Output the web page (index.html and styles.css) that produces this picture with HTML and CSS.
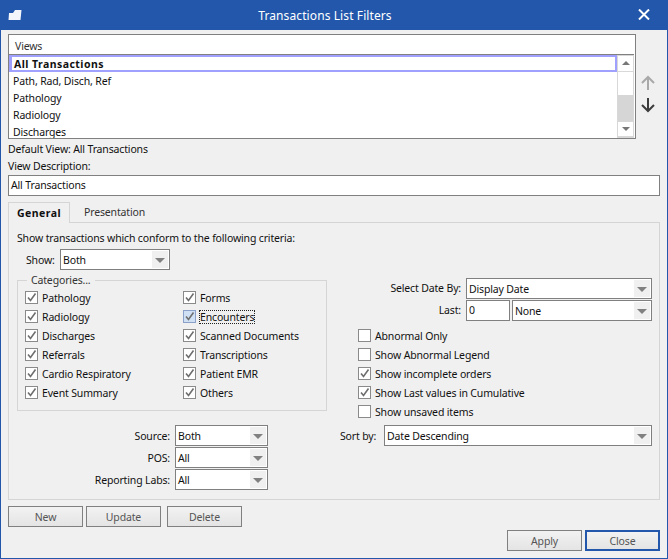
FILE: index.html
```html
<!DOCTYPE html>
<html lang="en">
<head>
    <meta charset="UTF-8">
    <meta name="viewport" content="width=device-width, initial-scale=1.0">
    <title>Transactions List Filters</title>
    <link rel="stylesheet" href="styles.css">
</head>
<body>

<svg class="defs" width="0" height="0">
    <symbol id="tick" viewBox="0 0 11 11"><path d="M2 5.5 L4.5 8.5 L9.5 1.5" fill="none" stroke="#6e6e6e" stroke-width="1.6"/></symbol>
</svg>

<div class="window">

    <!-- Title bar -->
    <div class="titlebar">
        <svg class="app-icon" width="14" height="12" viewBox="0 0 14 12"><path d="M1 4 L5 4 L7 1 L13.5 1 L12.5 11 L0.5 11 Z" fill="#f4f6fb"/></svg>
        <span class="title">Transactions List Filters</span>
        <svg class="close-icon" width="12" height="11" viewBox="0 0 12 11"><path d="M1 0.5 L11 10.5 M11 0.5 L1 10.5" stroke="#fff" stroke-width="2"/></svg>
    </div>

    <div class="content">

        <!-- Views list -->
        <div class="views-row">
            <div class="views">
                <div class="views-head">Views</div>
                <div class="views-body">
                    <div class="views-list">
                        <div class="view-item selected">All Transactions</div>
                        <div class="view-item">Path, Rad, Disch, Ref</div>
                        <div class="view-item">Pathology</div>
                        <div class="view-item">Radiology</div>
                        <div class="view-item">Discharges</div>
                    </div>
                    <div class="scrollbar">
                        <div class="scroll-btn"><span class="tri-up"></span></div>
                        <div class="scroll-track"><div class="scroll-thumb"></div></div>
                        <div class="scroll-btn"><span class="tri-down"></span></div>
                    </div>
                </div>
            </div>
            <div class="move-btns">
                <svg width="16" height="16" viewBox="0 0 16 16"><path d="M8 15 L8 2 M2 8 L8 2 L14 8" fill="none" stroke="#a9a9a9" stroke-width="2"/></svg>
                <svg width="16" height="16" viewBox="0 0 16 16"><path d="M8 1 L8 14 M2 8 L8 14 L14 8" fill="none" stroke="#3c3c3c" stroke-width="2"/></svg>
            </div>
        </div>

        <div class="default-view">Default View: All Transactions</div>
        <div class="desc-label">View Description:</div>
        <div class="desc-input">All Transactions</div>

        <!-- Tabs -->
        <div class="tabs">
            <div class="tab active">General</div>
            <div class="tab">Presentation</div>
        </div>

        <div class="panel">
            <div class="criteria">Show transactions which conform to the following criteria:</div>
            <div class="show-row">
                <span class="show-label">Show:</span>
                <div class="combo show-combo"><span class="combo-text">Both</span><span class="combo-btn"></span></div>
            </div>

            <div class="panel-grid">
                <fieldset class="categories">
                    <legend>Categories...</legend>
                    <div class="cat-grid">
                        <label class="check"><span class="box"><svg><use href="#tick"/></svg></span>Pathology</label>
                        <label class="check"><span class="box"><svg><use href="#tick"/></svg></span>Forms</label>
                        <label class="check"><span class="box"><svg><use href="#tick"/></svg></span>Radiology</label>
                        <label class="check"><span class="box hot"><svg><use href="#tick"/></svg></span><span class="focused">Encounters</span></label>
                        <label class="check"><span class="box"><svg><use href="#tick"/></svg></span>Discharges</label>
                        <label class="check"><span class="box"><svg><use href="#tick"/></svg></span>Scanned Documents</label>
                        <label class="check"><span class="box"><svg><use href="#tick"/></svg></span>Referrals</label>
                        <label class="check"><span class="box"><svg><use href="#tick"/></svg></span>Transcriptions</label>
                        <label class="check"><span class="box"><svg><use href="#tick"/></svg></span>Cardio Respiratory</label>
                        <label class="check"><span class="box"><svg><use href="#tick"/></svg></span>Patient EMR</label>
                        <label class="check"><span class="box"><svg><use href="#tick"/></svg></span>Event Summary</label>
                        <label class="check"><span class="box"><svg><use href="#tick"/></svg></span>Others</label>
                    </div>
                </fieldset>

                <div class="date-col">
                    <div class="date-row">
                        <span class="date-label">Select Date By:</span>
                        <div class="combo grow"><span class="combo-text">Display Date</span><span class="combo-btn"></span></div>
                    </div>
                    <div class="date-row">
                        <span class="date-label">Last:</span>
                        <div class="last-input">0</div>
                        <div class="combo grow"><span class="combo-text">None</span><span class="combo-btn"></span></div>
                    </div>
                    <div class="options">
                        <label class="check"><span class="box"></span>Abnormal Only</label>
                        <label class="check"><span class="box"></span>Show Abnormal Legend</label>
                        <label class="check"><span class="box"><svg><use href="#tick"/></svg></span>Show incomplete orders</label>
                        <label class="check"><span class="box"><svg><use href="#tick"/></svg></span>Show Last values in Cumulative</label>
                        <label class="check"><span class="box"></span>Show unsaved items</label>
                    </div>
                </div>

                <div class="source-col">
                    <div class="source-row">
                        <span class="source-label">Source:</span>
                        <div class="combo source-combo"><span class="combo-text">Both</span><span class="combo-btn"></span></div>
                    </div>
                    <div class="source-row">
                        <span class="source-label">POS:</span>
                        <div class="combo source-combo"><span class="combo-text">All</span><span class="combo-btn"></span></div>
                    </div>
                    <div class="source-row">
                        <span class="source-label">Reporting Labs:</span>
                        <div class="combo source-combo"><span class="combo-text">All</span><span class="combo-btn"></span></div>
                    </div>
                </div>

                <div class="sort-row">
                    <span class="sort-label">Sort by:</span>
                    <div class="combo grow"><span class="combo-text">Date Descending</span><span class="combo-btn"></span></div>
                </div>
            </div>
        </div>

        <!-- Buttons -->
        <div class="view-btns">
            <button class="btn">New</button>
            <button class="btn">Update</button>
            <button class="btn btn-gap">Delete</button>
        </div>
        <div class="dialog-btns">
            <button class="btn">Apply</button>
            <button class="btn default">Close</button>
        </div>
    </div>
</div>

</body>
</html>
```

FILE: styles.css
```css
* {
    box-sizing: border-box;
}
html, body {
    margin: 0;
    padding: 0;
}
body {
    width: 668px;
    height: 559px;
    overflow: hidden;
    font-family: "Noto Sans", sans-serif;
    font-size: 10.5px;
    letter-spacing: -0.15px;
    color: #111;
    background-color: #f0f0f0;
}
.defs {
    position: absolute;
}
.window {
    height: 559px;
    border: 1px solid #2257ab;
    border-top: none;
}
.titlebar {
    height: 30px;
    margin: 0 -1px;
    padding: 0 18px 0 8px;
    background-color: #2257ab;
    color: #fff;
    display: flex;
    align-items: center;
}
.title {
    flex: 1;
    padding: 1px 10px 0 0;
    text-align: center;
    font-size: 12px;
    letter-spacing: 0.1px;
}
.close-icon {
    margin-top: -1px;
}
.content {
    padding: 4px 7px 0;
}

/* Views list */
.views-row {
    display: flex;
}
.views {
    width: 628px;
    height: 105px;
    border: 1px solid #808080;
    background-color: #fff;
}
.views-head {
    height: 20px;
    padding: 4px 6px 0;
    line-height: 15px;
    border-bottom: 1px solid #808080;
    margin-right: 1px;
    color: #333;
}
.views-body {
    display: flex;
    height: 83px;
    overflow: hidden;
}
.views-list {
    flex: 1;
}
.view-item {
    height: 17px;
    line-height: 19px;
    padding-left: 4px;
}
.view-item.selected {
    border: 2px solid #a0a0ff;
    border-left-width: 3px;
    line-height: 15px;
    padding-left: 2px;
    font-weight: bold;
    letter-spacing: 0.45px;
}
.scrollbar {
    width: 17px;
    margin-right: 1px;
    display: flex;
    flex-direction: column;
    border: 1px solid #d8d8d8;
    border-top: none;
}
.scroll-btn {
    height: 17px;
    display: flex;
    align-items: center;
    justify-content: center;
    border-top: 1px solid #d8d8d8;
    border-bottom: 1px solid #d8d8d8;
}
.scroll-track {
    flex: 1;
    padding-top: 23px;
}
.scroll-thumb {
    height: 26px;
    background-color: #d6d6d6;
}
.tri-up, .tri-down {
    width: 0;
    height: 0;
    border-left: 4px solid transparent;
    border-right: 4px solid transparent;
}
.tri-up {
    border-bottom: 4px solid #777;
}
.tri-down {
    border-top: 4px solid #777;
}
.move-btns {
    display: flex;
    flex-direction: column;
    gap: 6px;
    padding: 41px 0 0 4px;
}
.default-view {
    margin-top: 4px;
    height: 13px;
    line-height: 13px;
}
.desc-label {
    margin-top: 4px;
    height: 13px;
    line-height: 13px;
}
.desc-input {
    margin-top: 2px;
    width: 652px;
    height: 21px;
    line-height: 18px;
    padding-left: 2px;
    border: 1px solid #808080;
    background-color: #fff;
}

/* Tabs */
.tabs {
    display: flex;
    margin-top: 6px;
    height: 21px;
}
.tab {
    padding-left: 14px;
    line-height: 21px;
    color: #333;
}
.tab.active {
    width: 62px;
    padding-left: 8px;
    border: 1px solid #d5d5d5;
    border-bottom: none;
    font-weight: bold;
    letter-spacing: 0.45px;
    color: #111;
    background-color: #f0f0f0;
    position: relative;
    z-index: 1;
}
.panel {
    width: 652px;
    height: 278px;
    margin-top: -1px;
    padding: 9px 7px 0 8px;
    border: 1px solid #d5d5d5;
}
.criteria {
    height: 13px;
    line-height: 13px;
}
.show-row {
    display: flex;
    align-items: center;
    margin: 4px 0 0 9px;
}
.show-label {
    width: 34px;
}

/* Combo boxes */
.combo {
    display: flex;
    height: 21px;
    border: 1px solid #808080;
    background-color: #fff;
    padding: 1px;
}
.combo-text {
    flex: 1;
    padding-left: 1px;
    line-height: 19px;
}
.combo-btn {
    width: 16px;
    background-color: #f0f0f0;
    position: relative;
}
.combo-btn::after {
    content: "";
    position: absolute;
    left: 3px;
    top: 7px;
    border-left: 5px solid transparent;
    border-right: 5px solid transparent;
    border-top: 5px solid #808080;
}
.show-combo {
    width: 110px;
}
.grow {
    flex: 1;
}

/* Panel layout */
.panel-grid {
    display: grid;
    grid-template-columns: 310px 312px;
    column-gap: 13px;
    margin-top: 4px;
}
.categories {
    margin: 0;
    padding: 0 0 0 7px;
    height: 137px;
    border: 1px solid #d5d5d5;
}
.categories legend {
    margin-left: 2px;
    padding: 0 4px;
    line-height: 12px;
    color: #333;
}
.cat-grid {
    display: grid;
    grid-template-columns: 158px 1fr;
    grid-auto-rows: 19px;
    margin-top: 2px;
}
.check {
    display: flex;
    align-items: center;
    height: 19px;
}
.box {
    width: 13px;
    height: 13px;
    margin-right: 4px;
    border: 1px solid #8a8a8a;
    background-color: #fff;
    flex: none;
}
.box svg {
    display: block;
    width: 11px;
    height: 11px;
}
.box.hot {
    background-color: #cfe0f5;
    border-color: #8aa0c8;
}
.focused {
    outline: 1px dotted #222;
    line-height: 12px;
}
.date-col {
    margin-top: 4px;
}
.date-row {
    display: flex;
    gap: 2px;
    height: 21px;
    margin-bottom: 1px;
}
.date-label {
    width: 121px;
    margin-right: 3px;
    text-align: right;
    line-height: 20px;
}
.last-input {
    width: 44px;
    height: 21px;
    padding-left: 2px;
    line-height: 19px;
    border: 1px solid #808080;
    background-color: #fff;
}
.options {
    margin: 5px 0 0 18px;
}
.source-col {
    padding-top: 4px;
}
.source-row {
    display: flex;
    align-items: center;
    justify-content: flex-end;
    height: 21px;
    margin-bottom: 1px;
    padding-right: 59px;
}
.source-label {
    margin-right: 5px;
}
.source-combo {
    width: 93px;
}
.sort-row {
    display: flex;
    align-items: center;
    height: 21px;
    margin-top: 4px;
}
.sort-label {
    width: 44px;
}

/* Buttons */
.btn {
    width: 75px;
    height: 21px;
    padding: 0;
    font-family: inherit;
    font-size: inherit;
    letter-spacing: inherit;
    color: #555;
    border: 1px solid #808080;
    background: linear-gradient(#f2f2f2, #e4e4e4);
}
.view-btns {
    display: flex;
    gap: 3px;
    margin-top: 6px;
}
.btn-gap {
    margin-left: 3px;
}
.dialog-btns {
    display: flex;
    justify-content: flex-end;
    gap: 3px;
    margin-top: 3px;
    width: 652px;
}
.btn.default {
    border: 2px solid #2257ab;
}
```
